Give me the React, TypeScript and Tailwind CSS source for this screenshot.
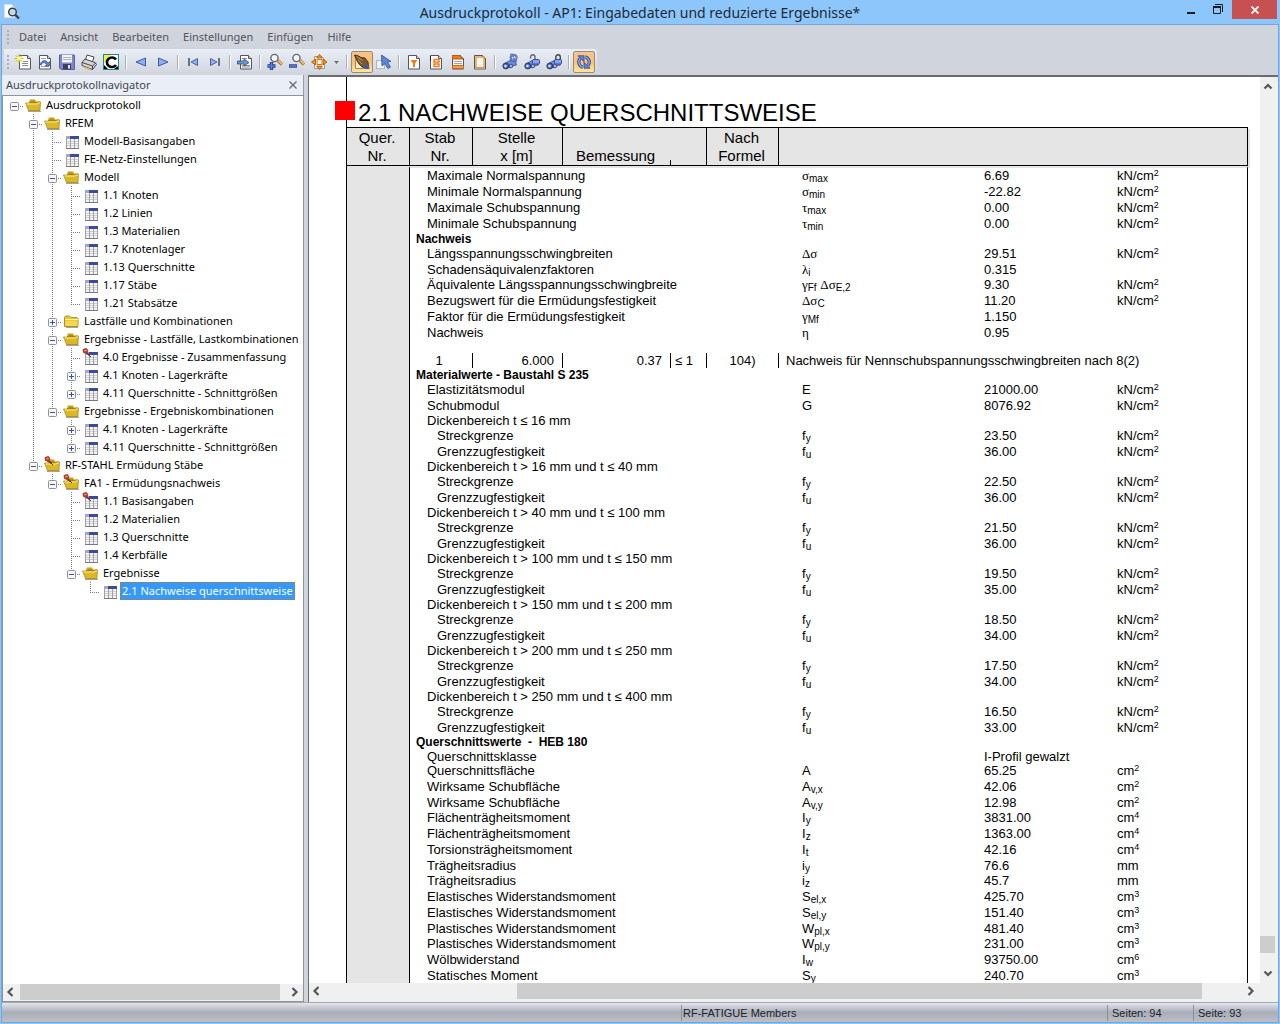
import type { ReactNode } from 'react';
import clsx from 'clsx';

/* ---------- Navigator tree ---------- */

type TreeNode = {
  label: string;
  icon: 'folder' | 'closed' | 'table' | 'folderPin' | 'tablePin';
  state?: 'open' | 'collapsed';
  selected?: boolean;
  children?: TreeNode[];
};

const tree: TreeNode = {
  label: 'Ausdruckprotokoll',
  icon: 'folder',
  state: 'open',
  children: [
    {
      label: 'RFEM',
      icon: 'folder',
      state: 'open',
      children: [
        { label: 'Modell-Basisangaben', icon: 'table' },
        { label: 'FE-Netz-Einstellungen', icon: 'table' },
        {
          label: 'Modell',
          icon: 'folder',
          state: 'open',
          children: [
            { label: '1.1 Knoten', icon: 'table' },
            { label: '1.2 Linien', icon: 'table' },
            { label: '1.3 Materialien', icon: 'table' },
            { label: '1.7 Knotenlager', icon: 'table' },
            { label: '1.13 Querschnitte', icon: 'table' },
            { label: '1.17 Stäbe', icon: 'table' },
            { label: '1.21 Stabsätze', icon: 'table' },
          ],
        },
        { label: 'Lastfälle und Kombinationen', icon: 'closed', state: 'collapsed' },
        {
          label: 'Ergebnisse - Lastfälle, Lastkombinationen',
          icon: 'folder',
          state: 'open',
          children: [
            { label: '4.0 Ergebnisse - Zusammenfassung', icon: 'tablePin' },
            { label: '4.1 Knoten - Lagerkräfte', icon: 'table', state: 'collapsed' },
            { label: '4.11 Querschnitte - Schnittgrößen', icon: 'table', state: 'collapsed' },
          ],
        },
        {
          label: 'Ergebnisse - Ergebniskombinationen',
          icon: 'folder',
          state: 'open',
          children: [
            { label: '4.1 Knoten - Lagerkräfte', icon: 'table', state: 'collapsed' },
            { label: '4.11 Querschnitte - Schnittgrößen', icon: 'table', state: 'collapsed' },
          ],
        },
      ],
    },
    {
      label: 'RF-STAHL Ermüdung Stäbe',
      icon: 'folderPin',
      state: 'open',
      children: [
        {
          label: 'FA1 - Ermüdungsnachweis',
          icon: 'folderPin',
          state: 'open',
          children: [
            { label: '1.1 Basisangaben', icon: 'tablePin' },
            { label: '1.2 Materialien', icon: 'table' },
            { label: '1.3 Querschnitte', icon: 'table' },
            { label: '1.4 Kerbfälle', icon: 'table' },
            {
              label: 'Ergebnisse',
              icon: 'folder',
              state: 'open',
              children: [{ label: '2.1 Nachweise querschnittsweise', icon: 'table', selected: true }],
            },
          ],
        },
      ],
    },
  ],
};

function Pin() {
  return (
    <g>
      <path d="M2 1.500 L5.500 .5 L7 3 L5 5.500 L2.500 4.500z" fill="#d8452c" stroke="#8c2416" strokeWidth=".8" />
      <path d="M3.500 2.500h2" stroke="#f4a898" />
      <path d="M5.500 4.500 L8.500 7.500" stroke="#7a2a1c" strokeWidth="1.500" />
      <path d="M8 7 L10 9" stroke="#333" />
    </g>
  );
}

function TableArt() {
  return (
    <g>
      <rect x="4" y="4" width="13" height="13" fill="#f4f4f4" />
      <path d="M4 9.500h13M4 11.500h13M4 13.500h13" stroke="#cfcfd2" />
      <path d="M4.500 4v13M8.500 7v10M12.500 7v10M16.500 7v10" stroke="#a2a2a6" />
      <path d="M4 16.500h13" stroke="#77777c" />
      <rect x="4" y="4" width="4" height="3" fill="#a4a8b8" />
      <rect x="8" y="4" width="9" height="3" fill="#3c4c94" />
    </g>
  );
}

function OpenFolderArt() {
  return (
    <g>
      <path d="M4 15.500h13" stroke="#a4a49c" />
      <path d="M4.500 14.500L5 5.500l1-2h5l1 1.500h4v9.500z" fill="#b48c18" />
      <path d="M5.500 6l.8-2.200h4.500l1 1.700h4" fill="none" stroke="#e8d060" />
      <path d="M1.500 7h11l1.500-1h2.500L16 14.500H4.500z" fill="#dcb824" stroke="#94760f" strokeWidth=".6" />
      <path d="M2.500 8h10.500l1.500-1h1.500" fill="none" stroke="#f8ee98" />
    </g>
  );
}

function ClosedFolderArt() {
  return (
    <g>
      <path d="M4 15.500h12" stroke="#a4a49c" />
      <path d="M2.500 14.500v-9l1-1.500h4l1.500 1.500h6l1 1v8z" fill="#ecc830" stroke="#9a7a14" strokeWidth=".8" />
      <path d="M3 7.500h13" stroke="#fbf2a8" />
      <path d="M3.500 9h12v5h-12z" fill="#f2d850" />
    </g>
  );
}

function NodeIcon({ icon }: { icon: TreeNode['icon'] }) {
  const isTable = icon === 'table' || icon === 'tablePin';
  return (
    <svg className="h-[18px] w-5 shrink-0" viewBox="0 0 20 18" aria-hidden="true">
      {isTable ? <TableArt /> : icon === 'closed' ? <ClosedFolderArt /> : <OpenFolderArt />}
      {(icon === 'tablePin' || icon === 'folderPin') && <Pin />}
    </svg>
  );
}

type GuideProps = { top?: boolean; bottom?: boolean; across?: boolean; state?: TreeNode['state'] };

function Guide({ top, bottom, across, state }: GuideProps) {
  return (
    <svg className="h-[18px] w-[19px] shrink-0" viewBox="0 0 19 18" aria-hidden="true">
      <g stroke="#7a7a7a" strokeDasharray="1 1" fill="none">
        {top && <path d="M9.500 0v10" />}
        {bottom && <path d="M9.500 10v8" />}
        {across && <path d="M9 10.500h10" />}
      </g>
      {state && (
        <g>
          <rect x="5.500" y="6.500" width="8" height="8" rx="1" fill="#f6f6f6" stroke="#919191" />
          <path d="M7 10.500h5" stroke="#3a50a0" />
          {state === 'collapsed' && <path d="M9.500 8v5" stroke="#3a50a0" />}
        </g>
      )}
    </svg>
  );
}

function TreeItem({ node, last, lines }: { node: TreeNode; last: boolean; lines: boolean[] }) {
  return (
    <li>
      <div className="flex h-[18px]">
        {lines.map((on, i) => (
          <Guide key={i} top={on} bottom={on} />
        ))}
        <Guide top={lines.length > 0} bottom={!last} across state={node.state} />
        <NodeIcon icon={node.icon} />
        <span
          className={clsx(
            'h-[18px] shrink-0 border border-dotted px-px leading-4 whitespace-nowrap',
            node.selected ? 'border-[#d07010] bg-[#3399ff] text-white' : 'border-transparent',
          )}
        >
          {node.label}
        </span>
      </div>
      {node.children && (
        <ul>
          {node.children.map((child, i) => (
            <TreeItem
              key={child.label}
              node={child}
              last={i === node.children!.length - 1}
              lines={[...lines, !last]}
            />
          ))}
        </ul>
      )}
    </li>
  );
}

/* ---------- Toolbar ---------- */

const Sheet = ({ x = 3 }: { x?: number }) => (
  <g transform={`translate(${x} 1)`}>
    <path d="M.5 .5h8l3 3v10.500H.5z" fill="#fdfdfd" stroke="#55555c" />
    <path d="M8.500 .5v3h3" fill="#d8d8de" stroke="#55555c" />
  </g>
);

const Glass = () => (
  <g>
    <path d="M11 6.500l4 4" stroke="#b87a34" strokeWidth="3.400" />
    <path d="M11.500 6.500l3.500 3.500" stroke="#f0c890" strokeWidth="1.400" />
    <circle cx="7.500" cy="4" r="3.600" fill="#eef6fb" stroke="#66666c" strokeWidth="1.400" />
  </g>
);

const Binoculars = () => (
  <g>
    <path d="M2.500 9.500L8 6.500l5.500 1 1 3.500-4.500 1-3 2z" fill="#6a8ee0" stroke="#2c3c78" strokeWidth=".7" />
    <circle cx="3.800" cy="12" r="3" fill="#4a68b4" stroke="#232b4c" strokeWidth=".8" />
    <circle cx="3.500" cy="12" r="1.200" fill="#e8eefc" />
    <circle cx="9" cy="12" r="1.800" fill="#9cb6f0" stroke="#2c3c78" strokeWidth=".8" />
  </g>
);

const Cycle = () => (
  <g fill="none">
    <path d="M7 13.300A5.500 5.500 0 0 1 4 4.500M9 2.700A5.500 5.500 0 0 1 12 11.500" stroke="#2c4a9c" strokeWidth="3.200" />
    <path d="M2 1.800h6v6z M14 14.200h-6v-6z" fill="#5c84dc" stroke="#2c4a9c" strokeWidth=".8" />
    <path d="M7 13.300A5.500 5.500 0 0 1 4 4.500M9 2.700A5.500 5.500 0 0 1 12 11.500" stroke="#86a8ec" strokeWidth="1.400" />
  </g>
);

type Tool = { name: string; active?: boolean; art: ReactNode } | 'sep' | 'drop';

const tools: Tool[] = [
  {
    name: 'Neues Ausdruckprotokoll',
    art: (
      <g>
        <Sheet x={4} />
        <path d="M8 7.500h5M7 9.500h6M7 11.500h6" stroke="#8a8a90" />
        <path d="M4 0v9M-.5 4.500h9M1 1.500l6 6M7 1.500l-6 6" stroke="#c8b400" />
        <circle cx="4" cy="4.500" r="2.200" fill="#fff66a" />
      </g>
    ),
  },
  {
    name: 'Öffnen',
    art: (
      <g>
        <Sheet x={2} />
        <path d="M4 4.500h5M4 12.500h8" stroke="#a0a0a6" />
        <path d="M3 11c1-5 6-6 8-2l1.500-1.500V12H8l1.500-1.500C8 8 5 8 4.500 11z" fill="#5a86c8" stroke="#2c4a80" strokeWidth=".6" />
      </g>
    ),
  },
  {
    name: 'Speichern',
    art: (
      <g>
        <path d="M.5 1h15v14.500H2L.5 14z" fill="#7a86d4" stroke="#5a62a6" />
        <rect x="3" y="1" width="10" height="7.500" fill="#f4f6fc" />
        <path d="M4 3.500h8M4 5.500h8" stroke="#a8aebe" />
        <rect x="4" y="10" width="8" height="5.500" fill="#3a3f5c" />
        <rect x="9" y="11" width="2" height="3.500" fill="#e8e8f4" />
      </g>
    ),
  },
  {
    name: 'Drucken',
    art: (
      <g stroke="#44444a">
        <path d="M4 7l2-6 7 2-2 6z" fill="#fff" />
        <path d="M1 8.500L4 5l10 3.500 1.500 2-4 5L1 11.500z" fill="#d4d4d8" />
        <path d="M1 8.500l10.500 3.500 3.500-3.500M11.500 12v3.500" fill="none" />
        <path d="M3 13l6 2.500" stroke="#d8b848" strokeWidth="1.500" />
      </g>
    ),
  },
  {
    name: 'Konfiguration',
    art: (
      <g>
        <rect x=".5" y=".5" width="15" height="15" fill="#fff" stroke="#1c8a8a" />
        <path d="M1 1h7L1 9z" fill="#f4f03c" />
        <path d="M13 5.500A5 4.800 0 1 0 13 11" fill="none" stroke="#000" strokeWidth="2.600" />
        <path d="M1 15v-4l4 4zM15 15h-4l4-3z" fill="#000" />
      </g>
    ),
  },
  'sep',
  { name: 'Vorherige Seite', art: <path d="M12.500 4v8L3 8z" fill="#8fb0f0" stroke="#3c58a8" /> },
  { name: 'Nächste Seite', art: <path d="M3.500 4v8L13 8z" fill="#8fb0f0" stroke="#3c58a8" /> },
  'sep',
  {
    name: 'Erste Seite',
    art: (
      <g>
        <path d="M12.500 4.500v7L6 8z" fill="#8fb0f0" stroke="#4c62a0" />
        <path d="M4 4v8" stroke="#6a7286" strokeWidth="2" />
      </g>
    ),
  },
  {
    name: 'Letzte Seite',
    art: (
      <g>
        <path d="M3.500 4.500v7L10 8z" fill="#8fb0f0" stroke="#4c62a0" />
        <path d="M12 4v8" stroke="#6a7286" strokeWidth="2" />
      </g>
    ),
  },
  'sep',
  {
    name: 'Gehe zu Seite',
    art: (
      <g>
        <Sheet />
        <path d="M5 4.500h5M5 11.500h8M5 13h8" stroke="#8a8a90" />
        <path d="M.5 7h6.500V5l5 3.500-5 3.500v-2H.5z" fill="#6a96dc" stroke="#2c4a80" strokeWidth=".8" />
      </g>
    ),
  },
  'sep',
  {
    name: 'Vergrößern',
    art: (
      <g>
        <Glass />
        <path d="M4.500 8v8M.5 12h8" stroke="#26388c" strokeWidth="3.400" />
        <path d="M4.500 8.500v7M1 12h7" stroke="#5a80dc" strokeWidth="1.600" />
      </g>
    ),
  },
  {
    name: 'Verkleinern',
    art: (
      <g>
        <Glass />
        <path d="M0 12h8" stroke="#26388c" strokeWidth="3.400" />
        <path d="M.5 12h7" stroke="#5a80dc" strokeWidth="1.600" />
      </g>
    ),
  },
  {
    name: 'Ganze Seite',
    art: (
      <g>
        <path d="M3.500 2.500h7l3 3v9h-10z" fill="#fff" stroke="#9a9aa0" />
        <path d="M8.500 .5L11.500 4h-6zM8.500 15.500l3-3.500h-6zM.5 8L4.500 5v6zM16 8l-4-3v6z" fill="#f0941c" stroke="#a85008" strokeWidth=".8" />
        <path d="M6 5.500h5v5H6z" fill="#fdf6e4" stroke="#d07810" />
      </g>
    ),
  },
  'drop',
  'sep',
  {
    name: 'Hand',
    active: true,
    art: (
      <g>
        <path d="M1.500 6.500h8v8h-8z" fill="#f8ecc8" stroke="#a08850" />
        <path d="M.5 1l3 .5L7 3.500l4 .5 3 4 .5 4-2.500 2.500-4-1.500L5 10 2 5z" fill="#7a5834" stroke="#2c2018" strokeWidth=".8" />
        <path d="M2.500 2.500l6 4M4 6l4 4" stroke="#c09860" />
        <path d="M9 13.500l5.500-3.500 1 5h-4z" fill="#3a58c0" />
      </g>
    ),
  },
  {
    name: 'Auswahl',
    art: (
      <g>
        <rect x=".5" y="6.500" width="8" height="8" fill="#f0f2f6" stroke="#b0b4bc" />
        <path d="M5.500 1l9.500 6.500-3.500.5 3 5-2.500 1.500-3-5L6 12z" fill="#5c86d8" stroke="#34508c" strokeWidth=".8" />
      </g>
    ),
  },
  'sep',
  {
    name: 'Filter',
    art: (
      <g>
        <Sheet x={2} />
        <path d="M4.500 6h7L9 9.500V13H7V9.500z" fill="#f07c14" />
      </g>
    ),
  },
  {
    name: 'Kapitel',
    art: (
      <g>
        <Sheet x={2} />
        <path d="M2.500 2v5" stroke="#222" />
        <path d="M6 5.500h5v2.500H6zM6 10h5v2.500H6z" fill="#fff" stroke="#f07c14" strokeWidth="1.400" />
      </g>
    ),
  },
  {
    name: 'Kopfzeile',
    art: (
      <g>
        <Sheet x={2} />
        <path d="M2.500 1.500h7l3.500 3.500H2.500z" fill="#f07c14" stroke="#b85c10" />
        <path d="M4 7.500h8M4 9.500h8" stroke="#a0a0a6" />
        <rect x="2.500" y="11.500" width="11" height="3" fill="#f8a050" stroke="#c86414" />
      </g>
    ),
  },
  {
    name: 'Deckblatt',
    art: (
      <g>
        <Sheet x={2} />
        <rect x="4" y="3" width="8" height="10.500" fill="#fff" stroke="#f09030" strokeWidth="1.400" />
      </g>
    ),
  },
  'sep',
  {
    name: 'Aktualisieren',
    art: (
      <g>
        <Binoculars />
        <g transform="translate(7 -1) scale(.58)">
          <Cycle />
        </g>
      </g>
    ),
  },
  {
    name: 'Entsperren',
    art: (
      <g>
        <Binoculars />
        <path d="M6.500 4.500V3a2.200 2.200 0 0 1 4.500 0v3" fill="none" stroke="#66666c" strokeWidth="1.400" />
        <rect x="8.500" y="5.500" width="7" height="4.500" rx="1" fill="#86a4ec" stroke="#3c4c98" />
      </g>
    ),
  },
  {
    name: 'Sperren',
    art: (
      <g>
        <Binoculars />
        <path d="M9.800 6V3a2.200 2.200 0 0 1 4.500 0v3" fill="none" stroke="#44444a" strokeWidth="1.400" />
        <rect x="8.500" y="5.500" width="7" height="4.500" rx="1" fill="#86a4ec" stroke="#3c4c98" />
      </g>
    ),
  },
  'sep',
  { name: 'Automatisch aktualisieren', active: true, art: <Cycle /> },
];

function Grip() {
  return (
    <div className="flex w-2 shrink-0 flex-col items-center justify-center gap-[2px]">
      {[0, 1, 2, 3].map((i) => (
        <span key={i} className="h-[2px] w-[2px] bg-[#a9adb8]" />
      ))}
    </div>
  );
}

function Toolbar() {
  return (
    <div className="mx-[2px] flex h-[26px] w-fit items-center rounded-r bg-linear-to-b from-[#eaeff7] to-[#d0d4dd] pr-[2px]">
      <Grip />
      {tools.map((tool, i) => {
        if (tool === 'sep') {
          return (
            <span key={i} className="flex w-2 justify-center">
              <span className="h-[14px] w-[2px] border-r border-white bg-[#a9adb8]" />
            </span>
          );
        }
        if (tool === 'drop') {
          return (
            <button key={i} aria-label="Zoomstufen" className="flex h-[22px] w-[13px] items-center justify-center">
              <svg className="h-[3px] w-[5px]" viewBox="0 0 5 3">
                <path d="M0 0h5L2.500 3z" fill="#6c6c70" />
              </svg>
            </button>
          );
        }
        return (
          <button
            key={i}
            aria-label={tool.name}
            className={clsx(
              'flex h-[22px] w-[22px] items-center justify-center rounded-[2px]',
              tool.active && 'border border-[#9a8c74] bg-linear-to-b from-[#f9c48c] via-[#fbc070] to-[#ffe79a]',
            )}
          >
            <svg className="h-4 w-4 shrink-0 overflow-visible" viewBox="0 0 16 16">
              {tool.art}
            </svg>
          </button>
        );
      })}
    </div>
  );
}

/* ---------- Report ---------- */

const Greek = ({ children }: { children: ReactNode }) => (
  <span className="font-['Liberation_Serif',serif] leading-[0]">{children}</span>
);

const Sub = ({ children }: { children: ReactNode }) => <sub className="-bottom-[2px] text-[10px]">{children}</sub>;

function Sym({ base, sub, greek }: { base: string; sub?: string; greek?: boolean }) {
  return (
    <>
      {greek ? <Greek>{base}</Greek> : base}
      {sub && <Sub>{sub}</Sub>}
    </>
  );
}

type Row = {
  kind?: 'head' | 'sub';
  h?: 14 | 15 | 27;
  label: string;
  sym?: ReactNode;
  value?: string;
  unit?: string;
  exp?: string;
};

const kn = { unit: 'kN/cm', exp: '2' };

const resultRows: Row[] = [
  { label: 'Maximale Normalspannung', sym: <Sym base="σ" sub="max" greek />, value: '6.69', ...kn },
  { label: 'Minimale Normalspannung', sym: <Sym base="σ" sub="min" greek />, value: '-22.82', ...kn },
  { label: 'Maximale Schubspannung', sym: <Sym base="τ" sub="max" greek />, value: '0.00', ...kn },
  { label: 'Minimale Schubspannung', h: 15, sym: <Sym base="τ" sub="min" greek />, value: '0.00', ...kn },
  { label: 'Nachweis', kind: 'head', h: 15 },
  { label: 'Längsspannungsschwingbreiten', sym: <Sym base="Δσ" greek />, value: '29.51', ...kn },
  { label: 'Schadensäquivalenzfaktoren', h: 15, sym: <Sym base="λ" sub="i" greek />, value: '0.315' },
  {
    label: 'Äquivalente Längsspannungsschwingbreite',
    sym: (
      <>
        <Sym base="γ" sub="Ff" greek /> <Sym base="Δσ" sub="E,2" greek />
      </>
    ),
    value: '9.30',
    ...kn,
  },
  { label: 'Bezugswert für die Ermüdungsfestigkeit', sym: <Sym base="Δσ" sub="C" greek />, value: '11.20', ...kn },
  { label: 'Faktor für die Ermüdungsfestigkeit', sym: <Sym base="γ" sub="Mf" greek />, value: '1.150' },
  { label: 'Nachweis', h: 27, sym: <Sym base="η" greek />, value: '0.95' },
];

const thicknessGroup = (range: string, fy: string, fu: string, tail: 14 | 15 = 15): Row[] => [
  { label: `Dickenbereich ${range}`, h: 15 },
  { label: 'Streckgrenze', kind: 'sub', sym: <Sym base="f" sub="y" />, value: fy, ...kn },
  { label: 'Grenzzugfestigkeit', kind: 'sub', h: tail, sym: <Sym base="f" sub="u" />, value: fu, ...kn },
];

const materialRows: Row[] = [
  { label: 'Materialwerte - Baustahl S 235', kind: 'head', h: 15 },
  { label: 'Elastizitätsmodul', sym: 'E', value: '21000.00', ...kn },
  { label: 'Schubmodul', h: 15, sym: 'G', value: '8076.92', ...kn },
  ...thicknessGroup('t ≤ 16 mm', '23.50', '36.00'),
  ...thicknessGroup('t > 16 mm und t ≤ 40 mm', '22.50', '36.00'),
  ...thicknessGroup('t > 40 mm und t ≤ 100 mm', '21.50', '36.00'),
  ...thicknessGroup('t > 100 mm und t ≤ 150 mm', '19.50', '35.00'),
  ...thicknessGroup('t > 150 mm und t ≤ 200 mm', '18.50', '34.00'),
  ...thicknessGroup('t > 200 mm und t ≤ 250 mm', '17.50', '34.00'),
  ...thicknessGroup('t > 250 mm und t ≤ 400 mm', '16.50', '33.00', 14),
  { label: 'Querschnittswerte  -  HEB 180', kind: 'head', h: 15 },
  { label: 'Querschnittsklasse', h: 14, value: 'I-Profil gewalzt' },
  { label: 'Querschnittsfläche', sym: 'A', value: '65.25', unit: 'cm', exp: '2' },
  { label: 'Wirksame Schubfläche', sym: <Sym base="A" sub="v,x" />, value: '42.06', unit: 'cm', exp: '2' },
  { label: 'Wirksame Schubfläche', h: 15, sym: <Sym base="A" sub="v,y" />, value: '12.98', unit: 'cm', exp: '2' },
  { label: 'Flächenträgheitsmoment', sym: <Sym base="I" sub="y" />, value: '3831.00', unit: 'cm', exp: '4' },
  { label: 'Flächenträgheitsmoment', sym: <Sym base="I" sub="z" />, value: '1363.00', unit: 'cm', exp: '4' },
  { label: 'Torsionsträgheitsmoment', sym: <Sym base="I" sub="t" />, value: '42.16', unit: 'cm', exp: '4' },
  { label: 'Trägheitsradius', h: 15, sym: <Sym base="i" sub="y" />, value: '76.6', unit: 'mm' },
  { label: 'Trägheitsradius', sym: <Sym base="i" sub="z" />, value: '45.7', unit: 'mm' },
  { label: 'Elastisches Widerstandsmoment', sym: <Sym base="S" sub="el,x" />, value: '425.70', unit: 'cm', exp: '3' },
  { label: 'Elastisches Widerstandsmoment', sym: <Sym base="S" sub="el,y" />, value: '151.40', unit: 'cm', exp: '3' },
  { label: 'Plastisches Widerstandsmoment', h: 15, sym: <Sym base="W" sub="pl,x" />, value: '481.40', unit: 'cm', exp: '3' },
  { label: 'Plastisches Widerstandsmoment', sym: <Sym base="W" sub="pl,y" />, value: '231.00', unit: 'cm', exp: '3' },
  { label: 'Wölbwiderstand', sym: <Sym base="I" sub="w" />, value: '93750.00', unit: 'cm', exp: '6' },
  { label: 'Statisches Moment', sym: <Sym base="S" sub="y" />, value: '240.70', unit: 'cm', exp: '3' },
];

const rowHeight = { 14: 'h-[14px]', 15: 'h-[15px]', 16: 'h-[16px]', 27: 'h-[27px]' };

function ReportRow({ row }: { row: Row }) {
  return (
    <tr className={clsx('align-top', rowHeight[row.h ?? 16])}>
      <td className="border-r border-black bg-[#e5e5e5]" />
      <td
        colSpan={5}
        className={clsx(
          'whitespace-pre',
          row.kind === 'head' ? 'pl-[6px] text-[12px] font-bold' : row.kind === 'sub' ? 'pl-[27px]' : 'pl-[17px]',
        )}
      >
        {row.label}
      </td>
      <td className="pl-[23px] whitespace-nowrap">{row.sym}</td>
      <td>{row.value}</td>
      <td className="border-r border-black">
        {row.unit}
        {row.exp && <sup className="-top-1 text-[9px]">{row.exp}</sup>}
      </td>
    </tr>
  );
}

const th = 'border-y border-r border-black bg-[#e5e5e5] p-0 pr-[2px] font-normal';

function Report() {
  return (
    <div className="mr-[12px] ml-[37px] font-['Liberation_Sans',sans-serif] text-black">
      <div className="relative flex h-[50px] items-end border-l border-black pl-[11px]">
        <span className="absolute top-[24px] -left-[12px] h-[19px] w-5 bg-[#ff0000]" />
        <h1 className="text-[24px] leading-7 whitespace-nowrap">2.1 NACHWEISE QUERSCHNITTSWEISE</h1>
      </div>
      <table className="w-full table-fixed border-separate border-spacing-0 border-l border-black text-[13px] leading-[14px]">
        <colgroup>
          <col className="w-[63px]" />
          <col className="w-[63px]" />
          <col className="w-[90px]" />
          <col className="w-[108px]" />
          <col className="w-[36px]" />
          <col className="w-[72px]" />
          <col className="w-[205px]" />
          <col className="w-[133px]" />
          <col />
        </colgroup>
        <thead className="text-[15px] leading-[18px]">
          <tr className="h-[39px]">
            <th className={th}>Quer.<br />Nr.</th>
            <th className={th}>Stab<br />Nr.</th>
            <th className={th}>Stelle<br />x [m]</th>
            <th colSpan={2} className={clsx(th, 'text-left align-bottom')}>
              <span className="flex items-end justify-between pr-[33px] pl-[13px]">
                Bemessung
                <span className="h-[5px] w-px bg-black" />
              </span>
            </th>
            <th className={th}>Nach<br />Formel</th>
            <th colSpan={3} className={clsx(th, 'shadow-[2px_2px_0_#e5e5e5]')} />
          </tr>
        </thead>
        <tbody>
          <tr className="h-[3px]">
            <td className="border-t-2 border-r border-t-[#e5e5e5] border-r-black bg-[#e5e5e5]" />
            <td colSpan={8} className="border-t-2 border-r border-t-[#e5e5e5] border-r-black" />
          </tr>
          {resultRows.map((row, i) => (
            <ReportRow key={i} row={row} />
          ))}
          <tr className="h-[15px]">
            <td className="border-r border-black bg-[#e5e5e5]" />
            <td className="border-r border-black pr-1 text-center">1</td>
            <td className="border-r border-black pr-2 text-right">6.000</td>
            <td className="border-r border-black pr-2 text-right">0.37</td>
            <td className="border-r border-black pl-1">≤ 1</td>
            <td className="border-r border-black text-center">104)</td>
            <td colSpan={3} className="border-r border-black pl-[7px] whitespace-nowrap">
              Nachweis für Nennschubspannungsschwingbreiten nach 8(2)
            </td>
          </tr>
          {materialRows.map((row, i) => (
            <ReportRow key={i} row={row} />
          ))}
        </tbody>
      </table>
    </div>
  );
}

/* ---------- Window chrome ---------- */

const arrows = {
  left: 'M6.500 1L2.500 5l4 4',
  right: 'M3.500 1l4 4-4 4',
  up: 'M1.500 6.500L5 3l3.500 3.500',
  down: 'M1.500 3.500L5 7l3.500-3.500',
};

function ScrollButton({ dir }: { dir: keyof typeof arrows }) {
  return (
    <button aria-label={dir} className="flex h-4 w-4 shrink-0 items-center justify-center">
      <svg className="h-[10px] w-[10px]" viewBox="0 0 10 10">
        <path d={arrows[dir]} fill="none" stroke="#55555a" strokeWidth="2.200" />
      </svg>
    </button>
  );
}

const menus = ['Datei', 'Ansicht', 'Bearbeiten', 'Einstellungen', 'Einfügen', 'Hilfe'];

export default function App() {
  return (
    <div className="flex h-screen flex-col overflow-hidden bg-[#8dc6fa] font-['Noto_Sans',sans-serif] text-[11px] text-black">
      <header className="grid h-[24px] shrink-0 grid-cols-[1fr_auto_1fr]">
        <svg className="mt-[4px] ml-[4px] h-4 w-4" viewBox="0 0 16 16" aria-hidden="true">
          <path d="M.5 .5h7l3 3v10H.5z" fill="#fafafa" stroke="#d8dce4" />
          <circle cx="8.500" cy="8" r="3.800" fill="#c4dcec" stroke="#3c3c40" strokeWidth="1.400" />
          <path d="M11.500 11l3.500 3.500" stroke="#3c3c40" strokeWidth="2.200" />
        </svg>
        <h2 className="text-[14px] leading-[25px] text-[#1e2a38]">
          Ausdruckprotokoll - AP1: Eingabedaten und reduzierte Ergebnisse*
        </h2>
        <div className="flex items-start justify-end pr-[3px]">
          <button aria-label="Minimieren" className="flex h-[19px] w-[26px] items-center justify-center">
            <svg className="h-[10px] w-[10px]" viewBox="0 0 10 10">
              <path d="M1 8h8" stroke="#1c1c1c" strokeWidth="2" />
            </svg>
          </button>
          <button aria-label="Wiederherstellen" className="flex h-[18px] w-[28px] items-center justify-center">
            <svg className="h-[10px] w-[10px]" viewBox="0 0 10 10">
              <path d="M.5 3v6.500h7V3M0 3h8M2 .5h7.500V8" fill="none" stroke="#1c1c1c" />
              <path d="M0 3h8" stroke="#1c1c1c" strokeWidth="2" />
            </svg>
          </button>
          <button aria-label="Schließen" className="flex h-[19px] w-[45px] items-center justify-center bg-[#c75050]">
            <svg className="h-2 w-2" viewBox="0 0 8 8">
              <path d="M.5 .5l7 7M7.500 .5l-7 7" stroke="#fff" strokeWidth="1.800" />
            </svg>
          </button>
        </div>
      </header>

      <div className="mx-px mb-px flex min-h-0 flex-1 flex-col border border-[#72a8d8] bg-[#d0d4dd]">
        <nav className="flex h-6 shrink-0 items-center pl-[2px] text-[#55525a]">
          <Grip />
          {menus.map((menu) => (
            <button key={menu} className="h-[22px] px-[7px]">
              {menu}
            </button>
          ))}
        </nav>
        <Toolbar />

        <div className="flex min-h-0 flex-1 gap-1">
          <aside className="flex w-[302px] shrink-0 flex-col">
            <div className="flex h-[20px] items-center justify-between border-r border-[#989ca6] bg-[#eaeff7] pr-[6px] pl-1 text-[#44444c]">
              Ausdruckprotokollnavigator
              <button aria-label="Navigator schließen">
                <svg className="h-2 w-2" viewBox="0 0 8 8">
                  <path d="M.5 .5l7 7M7.500 .5l-7 7" stroke="#6a6a70" strokeWidth="1.300" />
                </svg>
              </button>
            </div>
            <div className="flex min-h-0 flex-1 flex-col border border-[#8f939c] bg-white">
              <ul className="min-h-0 flex-1 overflow-hidden pl-[2px]">
                <TreeItem node={tree} last lines={[]} />
              </ul>
              <div className="flex h-[17px] bg-[#f0f0f0] pr-px pb-px">
                <ScrollButton dir="left" />
                <div className="ml-px flex-1 bg-[#cdcdcd]" />
                <div className="w-[6px]" />
                <ScrollButton dir="right" />
              </div>
            </div>
          </aside>

          <main className="flex min-w-0 flex-1 flex-col border-t-2 border-l border-t-[#6c6c70] border-l-[#6c6c70] bg-[#f0f0f0]">
            <div className="flex min-h-0 flex-1">
              <div className="min-w-0 flex-1 overflow-hidden bg-white">
                <Report />
              </div>
              <div className="flex w-[18px] flex-col bg-[#f0f0f0] py-[2px]">
                <ScrollButton dir="up" />
                <div className="flex-[842]" />
                <div className="h-[17px] w-[15px] bg-[#cdcdcd]" />
                <div className="flex-[12]" />
                <ScrollButton dir="down" />
              </div>
            </div>
            <div className="flex h-[19px] items-start pr-5">
              <ScrollButton dir="left" />
              <div className="flex-[192]" />
              <div className="h-4 flex-[685] bg-[#cdcdcd]" />
              <div className="flex-[40]" />
              <ScrollButton dir="right" />
            </div>
          </main>
        </div>

        <footer className="flex h-[20px] shrink-0 items-center border-t border-[#a4a8b0] bg-linear-to-b from-[#e4e6ec] via-[#a9adb8] to-[#bcbfc6] font-['Liberation_Sans',sans-serif] text-[#222228]">
          <div className="flex-1" />
          <div className="w-[426px] border-l border-[#8c9099] pl-px leading-4">RF-FATIGUE Members</div>
          <div className="w-[86px] border-l border-[#8c9099] pl-1 leading-4">Seiten: 94</div>
          <div className="w-[85px] border-l border-[#8c9099] pl-1 leading-4">Seite: 93</div>
        </footer>
      </div>
    </div>
  );
}
